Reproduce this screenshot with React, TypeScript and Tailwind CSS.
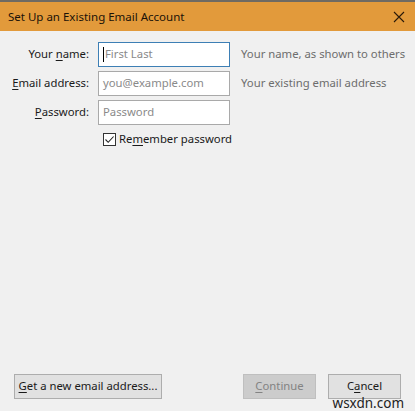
const font = { fontFamily: '"Segoe UI", "Noto Sans", "Liberation Sans", sans-serif' }

const fields = [
  { pre: 'Your ', key: 'n', post: 'ame:', placeholder: 'First Last', hint: 'Your name, as shown to others', focused: true },
  { pre: '', key: 'E', post: 'mail address:', placeholder: 'you@example.com', hint: 'Your existing email address' },
  { pre: '', key: 'P', post: 'assword:', placeholder: 'Password', hint: '' }
]

export default function App() {
  return (
    <div
      className="relative flex h-[411px] w-[415px] flex-col overflow-hidden whitespace-nowrap bg-[#f0f0f0] text-[11.3px] text-[#1a1a1a]"
      style={font}
    >
      <div className="flex h-[31px] shrink-0 items-center justify-between border-t-2 border-[#6f6a62] bg-[#e29a3b] pl-[8px] pr-[8px]">
        <span className="pt-[1px] text-[11.5px] text-[#1b1208]">Set Up an Existing Email Account</span>
        <svg width="12" height="12" viewBox="0 0 12 12" className="mr-[2px]">
          <path d="M1 1L11 11M11 1L1 11" stroke="#2a1a0a" strokeWidth="1.1" />
        </svg>
      </div>

      <div className="mt-[11px] flex flex-col gap-[4px]">
        {fields.map((f) => (
          <div key={f.placeholder} className="flex h-[25px] items-center">
            <label className="w-[89px] text-right">
              {f.pre}
              <span className="underline underline-offset-2">{f.key}</span>
              {f.post}
            </label>
            <div
              className={`ml-[9px] flex h-[25px] w-[132px] items-center border bg-white px-[4px] ${
                f.focused ? 'border-[#3d7fb5]' : 'border-[#a9a9a9]'
              }`}
            >
              {f.focused && <span className="mr-[1px] h-[15px] w-px bg-black" />}
              <span className="text-[#8a8a8a]">{f.placeholder}</span>
            </div>
            <span className="ml-[11px] text-[#6d6d6d]">{f.hint}</span>
          </div>
        ))}
        <div className="mt-[2px] flex items-center pl-[103px]">
          <span className="flex h-[13px] w-[13px] items-center justify-center border border-[#333] bg-white">
            <svg width="11" height="11" viewBox="0 0 11 11">
              <path d="M1.5 5.5L4.2 8.3L9.6 2.5" fill="none" stroke="#222" strokeWidth="1.1" />
            </svg>
          </span>
          <span className="ml-[3px]">
            Re<span className="underline underline-offset-2">m</span>ember password
          </span>
        </div>
      </div>

      <div className="mt-auto mb-[12px] flex items-center px-[14px]">
        <button className="h-[25px] w-[148px] border border-[#adadad] bg-[#e1e1e1]">
          <span className="underline underline-offset-2">G</span>et a new email address...
        </button>
        <button className="ml-auto h-[25px] w-[73px] border border-[#bfbfbf] bg-[#cccccc] text-[#838383]">
          <span className="underline underline-offset-2">C</span>ontinue
        </button>
        <button className="ml-[12px] h-[25px] w-[73px] border border-[#adadad] bg-[#e1e1e1]">
          C<span className="underline underline-offset-2">a</span>ncel
        </button>
      </div>

      <span className="absolute bottom-0 right-[11px] text-[13.5px] leading-[16px] text-[#222]">wsxdn.com</span>
    </div>
  )
}
